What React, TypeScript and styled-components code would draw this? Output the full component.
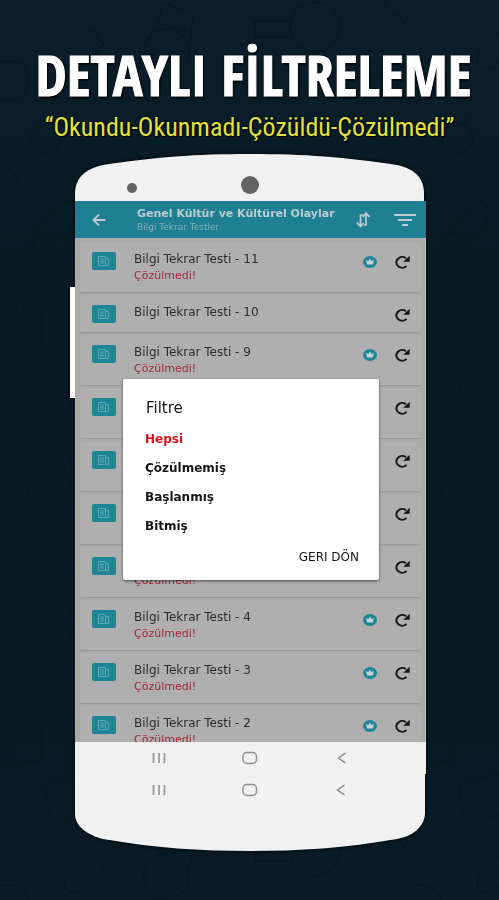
import React from "react";
import styled, { createGlobalStyle, css } from "styled-components";

const wide = '"DejaVu Sans", "Noto Sans", sans-serif';

const Global = createGlobalStyle`
  * { box-sizing: border-box; }
  body { margin: 0; background: #071b26; }
  button { border: 0; padding: 0; background: none; color: inherit; font: inherit; cursor: pointer; }
  h1, h2, p, ul { margin: 0; padding: 0; }
  svg { display: block; }
`;

const Page = styled.div`
  position: relative;
  min-height: 100vh;
  overflow: hidden;
  padding-bottom: 48px;
  background: linear-gradient(#0a1f2b, #071b25 30%, #071b25 80%, #081d28);
`;

const Doodles = styled.svg`
  position: absolute;
  inset: 0;
  width: 100%;
  height: 100%;
`;

const Banner = styled.header`
  position: relative;
  padding: 44px 12px 12px;
  text-align: center;
  white-space: nowrap;
`;

const Headline = styled.h1`
  padding-left: 8px;
  font-family: "Open Sans Condensed", "Roboto Condensed", "Liberation Sans", sans-serif;
  font-size: 56px;
  line-height: 60px;
  font-weight: 700;
  color: #fff;
  -webkit-text-stroke: 1px #fff;
  text-shadow: 0 0 3px #000, 1px 2px 2px #000;
`;

const Tagline = styled.p`
  margin-top: 8px;
  font-family: "Roboto Condensed", "Liberation Sans", sans-serif;
  font-size: 26px;
  line-height: 30px;
  color: #e3e23a;
  text-shadow: 0 0 2px #000, 1px 1px 1px #000;
`;

const Phone = styled.main`
  position: relative;
  margin: 0 73px 0 75px;
  filter: drop-shadow(0 0 2px #000);
`;

const Cap = styled.svg`
  width: 100%;
  height: 47px;
`;

const SideKey = styled.div`
  position: absolute;
  left: -5px;
  top: 133px;
  width: 5px;
  height: 111px;
  background: #fff;
`;

const Screen = styled.section`
  position: relative;
  height: 541px;
  overflow: hidden;
  display: flex;
  flex-direction: column;
  background: #aaa;
`;

const AppBar = styled.header`
  display: flex;
  align-items: center;
  flex: none;
  height: 37px;
  padding: 0 10px 0 16px;
  background: #1f7f93;
  color: #bccdd1;
`;

const BarTitles = styled.div`
  flex: 1;
  min-width: 0;
  padding: 1px 0 0 30px;
  white-space: nowrap;
  font-family: ${wide};
`;

const BarTitle = styled.h2`
  font-size: 11px;
  line-height: 14px;
  font-weight: 700;
`;

const BarSubtitle = styled.p`
  font-size: 9px;
  line-height: 12px;
  color: #7fb0ba;
`;

const BarActions = styled.div`
  display: flex;
  align-items: center;
  gap: 23px;
`;

const TestList = styled.ul`
  flex: none;
  display: flex;
  flex-direction: column;
  gap: 3px;
  padding: 4px 4px 0 5px;
  border-right: 1px solid #c4c6c6;
  list-style: none;
`;

const TestCard = styled.li<{ $short: boolean }>`
  flex: none;
  display: flex;
  align-items: flex-start;
  height: ${(p) => (p.$short ? 37 : 50)}px;
  padding: 9px 11px 0 12px;
  border-radius: 2px;
  background: #afafaf;
  box-shadow: 0 1px 1px #989898;
  font-family: ${wide};
`;

const Thumb = styled.span`
  display: grid;
  place-items: center;
  width: 24px;
  height: 18px;
  border-radius: 2px;
  background: #1e8597;
  margin: 1px 18px 0 0;
`;

const TestText = styled.div`
  flex: 1;
  min-width: 0;
  white-space: nowrap;
`;

const TestName = styled.p`
  font-size: 12px;
  line-height: 17px;
  color: #2c2c2c;
`;

const TestStatus = styled.p`
  font-size: 11px;
  line-height: 15px;
  color: #a3283a;
`;

const RowIcons = styled.div`
  display: flex;
  align-items: center;
  gap: 17px;
  padding-top: 4px;
`;

const Overlay = styled.div`
  position: absolute;
  inset: 0;
  display: flex;
  align-items: center;
  justify-content: center;
  padding: 15px 47px 0 48px;
`;

const Dialog = styled.div`
  flex: 1;
  display: flex;
  flex-direction: column;
  align-items: flex-start;
  padding: 19px 20px 13px 22px;
  border-radius: 2px;
  background: #fff;
  box-shadow: 0 1px 3px rgba(0, 0, 0, 0.6);
  font-family: ${wide};
  color: #161616;
`;

const DialogTitle = styled.h2`
  padding: 0 1px;
  margin-bottom: 7px;
  font-size: 15px;
  line-height: 20px;
  font-weight: 400;
`;

const Option = styled.button<{ $on: boolean }>`
  && {
    font-size: 12px;
    line-height: 29px;
    font-weight: 700;
    color: ${(p) => (p.$on ? "#d8141c" : "#161616")};
  }
`;

const DismissButton = styled.button`
  && {
    align-self: flex-end;
    margin-top: 6px;
    font-size: 12px;
    line-height: 20px;
  }
`;

const Chin = styled.footer`
  position: relative;
`;

const NavBar = styled.nav<{ $first?: boolean }>`
  display: grid;
  grid-template-columns: repeat(3, 1fr);
  place-items: center;
  height: 32px;
  padding: 0 38px;
  background: #f1f1f1;
  ${(p) =>
    !p.$first &&
    css`
      margin-right: 1px;
    `}
`;

const ChinCurve = styled.svg`
  width: 100%;
  height: 46px;
`;

const BackIcon = () => (
  <svg width="16" height="14" viewBox="0 0 16 14" fill="none" stroke="currentColor" strokeWidth="1.8">
    <path d="M14.500 7H2.500M8 1.500 2.500 7l5.500 5.500" />
  </svg>
);

const SortIcon = () => (
  <svg width="15" height="18" viewBox="0 0 15 18" fill="none" stroke="currentColor" strokeWidth="1.700">
    <path d="M7 4H4.500v11M1 11.500l3.500 4 3-3.500" />
    <path d="M7.500 14H10V2.500M7 6l3-4 3.500 4" />
  </svg>
);

const FilterIcon = () => (
  <svg width="22" height="14" viewBox="0 0 22 14" fill="none" stroke="currentColor" strokeWidth="2">
    <path d="M0 2h22M4 7h14M8 12h6" />
  </svg>
);

const PageIcon = () => (
  <svg width="12" height="12" viewBox="0 0 12 12" fill="none" stroke="#5fa7b3" strokeWidth="1">
    <path d="M.5 1.500h7v9h-7zM7.500 3.500h3v7h-3M2 4h4M2 6h4M2 8h4" />
  </svg>
);

const CrownBadge = () => (
  <svg width="14" height="12" viewBox="0 0 14 12" role="img" aria-label="Premium">
    <ellipse cx="7" cy="6" rx="7" ry="6" fill="#1e8597" />
    <path d="M3.200 3.800 5.300 5.200 7 2.600l1.700 2.600 2.100-1.400-.8 4.700H4z" fill="#c3d3d6" />
  </svg>
);

const RefreshIcon = () => (
  <svg width="16" height="14" viewBox="0 0 16 14">
    <path d="M12.600 11.100A6 5.300 0 1 1 12 3.200" fill="none" stroke="#161616" strokeWidth="2" />
    <path d="M15.700.8v6H9.200z" fill="#161616" />
  </svg>
);

const RecentsIcon = () => (
  <svg width="14" height="12" viewBox="0 0 14 12" stroke="#9a9a9a" strokeWidth="1.800">
    <path d="M1.500 1v10M7 1v10M12.500 1v10" />
  </svg>
);

const HomeIcon = () => (
  <svg width="16" height="14" viewBox="0 0 16 14" fill="none" stroke="#8d8d8d" strokeWidth="1.500">
    <rect x="1" y="1.500" width="13.500" height="11" rx="4" />
  </svg>
);

const ChevronIcon = () => (
  <svg width="10" height="12" viewBox="0 0 10 12" fill="none" stroke="#858585" strokeWidth="1.400">
    <path d="M8.500 1 1.500 6l7 5" />
  </svg>
);

const Backdrop = () => (
  <Doodles aria-hidden="true">
    <defs>
      <pattern id="doodle" width="413" height="412" patternUnits="userSpaceOnUse">
        <g fill="none" stroke="#04131c" strokeOpacity=".45" strokeWidth="2" strokeLinejoin="round">
          <path d="M163 3 193 14l-3 32M163 3l-6 20 34 9M150 38l-8 20" />
          <circle cx="166" cy="52" r="23" />
          <circle cx="315" cy="27" r="25" />
          <path d="M289 21h-34v16h36M385 2l2 14 12-2 5 10 12-20M90 28 66 52c-6 14 4 20 16 14l22-22z" />
          <path d="M0 62c22-6 34 12 26 28-6 12-16 12-26 10" />
          <circle cx="45" cy="139" r="15" />
          <path d="M50 124 60 114M0 168c8-2 16 4 17 12-4 8-10 9-17 10" />
          <path d="M32 250c0-22 18-38 38-50 10 12 4 26-6 34-8 8-20 14-32 16zM36 234c10-4 18 4 16 12" />
          <path d="M8 322c6-4 8-10 9-20 8 2 8 8 6 13l18-3v36l-36 4-5-2M8 322v26" />
          <path d="M46 372 86 362l6 38-34 15c-8-8-12-26-12-43z" />
        </g>
      </pattern>
    </defs>
    <rect width="100%" height="100%" fill="url(#doodle)" />
  </Doodles>
);

const tests = [11, 10, 9, 8, 7, 6, 5, 4, 3, 2].map((n) => ({ n, solved: n === 10 }));
const filters = ["Hepsi", "Çözülmemiş", "Başlanmış", "Bitmiş"];

const Navigation = ({ first }: { first?: boolean }) => (
  <NavBar $first={first}>
    <button aria-label="Son uygulamalar"><RecentsIcon /></button>
    <button aria-label="Ana ekran"><HomeIcon /></button>
    <button aria-label="Geri"><ChevronIcon /></button>
  </NavBar>
);

export default function App() {
  const [active, setActive] = React.useState("Hepsi");
  return (
    <Page lang="tr">
      <Global />
      <Backdrop />
      <Banner>
        <Headline>DETAYLI FİLTRELEME</Headline>
        <Tagline>“Okundu-Okunmadı-Çözüldü-Çözülmedi”</Tagline>
      </Banner>
      <Phone>
        <SideKey />
        <Cap viewBox="0 0 351 47" preserveAspectRatio="none" aria-hidden="true">
          <path d="M0 47V40C0 24 10 15 28 11 80 3 120 0 175 0s95 3 147 11c18 4 27 13 27 29v7z" fill="#f1f1f1" />
          <circle cx="57" cy="34" r="5" fill="#646464" />
          <circle cx="175" cy="31" r="9" fill="#646464" />
        </Cap>
        <Screen>
          <AppBar>
            <button aria-label="Geri"><BackIcon /></button>
            <BarTitles>
              <BarTitle>Genel Kültür ve Kültürel Olaylar</BarTitle>
              <BarSubtitle>Bilgi Tekrar Testler</BarSubtitle>
            </BarTitles>
            <BarActions>
              <button aria-label="Sırala"><SortIcon /></button>
              <button aria-label="Filtrele"><FilterIcon /></button>
            </BarActions>
          </AppBar>
          <TestList>
            {tests.map((t) => (
              <TestCard key={t.n} $short={t.solved}>
                <Thumb><PageIcon /></Thumb>
                <TestText>
                  <TestName>Bilgi Tekrar Testi - {t.n}</TestName>
                  {!t.solved && <TestStatus>Çözülmedi!</TestStatus>}
                </TestText>
                <RowIcons>
                  {!t.solved && <CrownBadge />}
                  <button aria-label={`Test ${t.n} yenile`}><RefreshIcon /></button>
                </RowIcons>
              </TestCard>
            ))}
          </TestList>
          <Overlay>
            <Dialog role="dialog" aria-labelledby="filter-title">
              <DialogTitle id="filter-title">Filtre</DialogTitle>
              {filters.map((f) => (
                <Option key={f} $on={f === active} onClick={() => setActive(f)}>{f}</Option>
              ))}
              <DismissButton>GERI DÖN</DismissButton>
            </Dialog>
          </Overlay>
        </Screen>
        <Chin>
          <Navigation first />
          <Navigation />
          <ChinCurve viewBox="0 0 351 46" preserveAspectRatio="none" aria-hidden="true">
            <path d="M0 0H350V8C349 21 338 30 322 33 270 42 225 45 175 45S80 42 28 33C12 29 0 20 0 8z" fill="#f1f1f1" />
          </ChinCurve>
        </Chin>
      </Phone>
    </Page>
  );
}
